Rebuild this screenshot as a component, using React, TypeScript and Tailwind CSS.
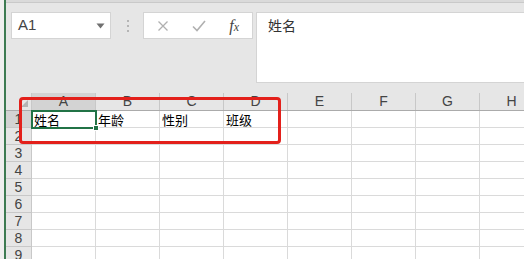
import React from "react";

const cols = ["A", "B", "C", "D", "E", "F", "G", "H"];
const rows = [1, 2, 3, 4, 5, 6, 7, 8, 9];
const row1 = ["姓名", "年龄", "性别", "班级", "", "", "", ""];

export default function App() {
  const font = { fontFamily: '"Noto Sans CJK SC", "Liberation Sans", sans-serif' };
  return (
    <div className="relative w-[524px] h-[259px] overflow-hidden bg-[#e6e6e6] flex" style={{ fontFamily: '"Liberation Sans", Arial, sans-serif' }}>
      <div className="w-[4px] h-full bg-[#efefef] shrink-0" />
      <div className="w-[2px] h-full bg-[#3d7b52] shrink-0" />
      <div className="flex-1 flex flex-col min-w-0">
        {/* top strip */}
        <div className="h-[3px] bg-[#dadada] border-b border-[#c9c9c9] shrink-0" />
        {/* formula area */}
        <div className="flex items-start pt-[9px] h-[80px] shrink-0">
          <div className="ml-[5px] w-[100px] h-[27px] bg-white border border-[#d4d4d4] flex items-center justify-between pl-[6px] pr-[5px]">
            <span className="text-[15px] text-[#444]">A1</span>
            <svg width="9" height="6" viewBox="0 0 9 6"><path d="M0.5 0.5 L8.5 0.5 L4.5 5.5 Z" fill="#707070" /></svg>
          </div>
          <div className="w-[32px] h-[27px] flex items-center justify-center">
            <div className="flex flex-col gap-[3px] ml-[2px]">
              <div className="w-[2px] h-[2px] bg-[#b5b5b5]" />
              <div className="w-[2px] h-[2px] bg-[#b5b5b5]" />
              <div className="w-[2px] h-[2px] bg-[#b5b5b5]" />
            </div>
          </div>
          <div className="w-[110px] h-[27px] bg-white border border-[#d4d4d4] flex items-center">
            <div className="w-[36px] flex justify-center ml-[1px]">
              <svg width="12" height="12" viewBox="0 0 12 12"><path d="M1.5 1.5 L10.5 10.5 M10.5 1.5 L1.5 10.5" stroke="#b0b0b0" strokeWidth="1.3" fill="none" /></svg>
            </div>
            <div className="w-[36px] flex justify-center">
              <svg width="14" height="12" viewBox="0 0 14 12"><path d="M1 6.5 L5 10.5 L13 1" stroke="#b0b0b0" strokeWidth="1.6" fill="none" /></svg>
            </div>
            <div className="w-[36px] flex justify-center">
              <span className="text-[16px] italic text-[#444] leading-none" style={{ fontFamily: '"Liberation Serif", serif' }}>
                f<span className="text-[12px]">x</span>
              </span>
            </div>
          </div>
          <div className="ml-[3px] flex-1 h-[71px] bg-white border-l border-t border-b border-[#d4d4d4] pl-[11px]">
            <span className="text-[14px] text-[#333] leading-[24px]" style={font}>姓名</span>
          </div>
        </div>
        <div className="h-[10px] shrink-0" />
        {/* header row */}
        <div className="flex h-[18px] shrink-0 border-b border-[#ababab]">
          <div className="w-[26px] shrink-0 border-r border-[#c8c8c8] relative">
            <svg className="absolute right-[3px] bottom-[3px]" width="7" height="7" viewBox="0 0 7 7"><path d="M7 0 L7 7 L0 7 Z" fill="#b4b4b4" /></svg>
          </div>
          {cols.map((c, i) => (
            <div
              key={c}
              className={`w-[64px] shrink-0 border-r border-[#c8c8c8] flex items-center justify-center text-[14px] text-[#444] ${i === 0 ? "bg-[#d3d3d3]" : ""}`}
            >
              {c}
            </div>
          ))}
        </div>
        {/* rows */}
        <div className="relative flex-1 bg-white">
          {rows.map((r) => (
            <div key={r} className="flex h-[17px]">
              <div className={`w-[26px] shrink-0 border-r border-b border-[#c8c8c8] flex items-center justify-center text-[14px] text-[#444] ${r === 1 ? "bg-[#d3d3d3]" : "bg-[#e6e6e6]"}`}>
                {r}
              </div>
              {cols.map((c, i) => (
                <div key={c} className="w-[64px] shrink-0 border-r border-b border-[#dadada] flex items-center pl-[2px] text-[13px] text-black leading-none" style={font}>
                  {r === 1 ? row1[i] : ""}
                </div>
              ))}
            </div>
          ))}
          {/* selected cell A1 */}
          <div className="absolute z-10 left-[25px] top-[-1px] w-[66px] h-[19px] border-2 border-[#217346] pointer-events-none" />
          <div className="absolute z-20 left-[87px] top-[14px] w-[6px] h-[6px] bg-[#217346] border border-white" />
        </div>
      </div>
      {/* red annotation box */}
      <div className="absolute z-30 left-[19px] top-[97px] w-[262px] h-[47px] border-[3px] border-[#e3201b] rounded-[4px] pointer-events-none" />
    </div>
  );
}
